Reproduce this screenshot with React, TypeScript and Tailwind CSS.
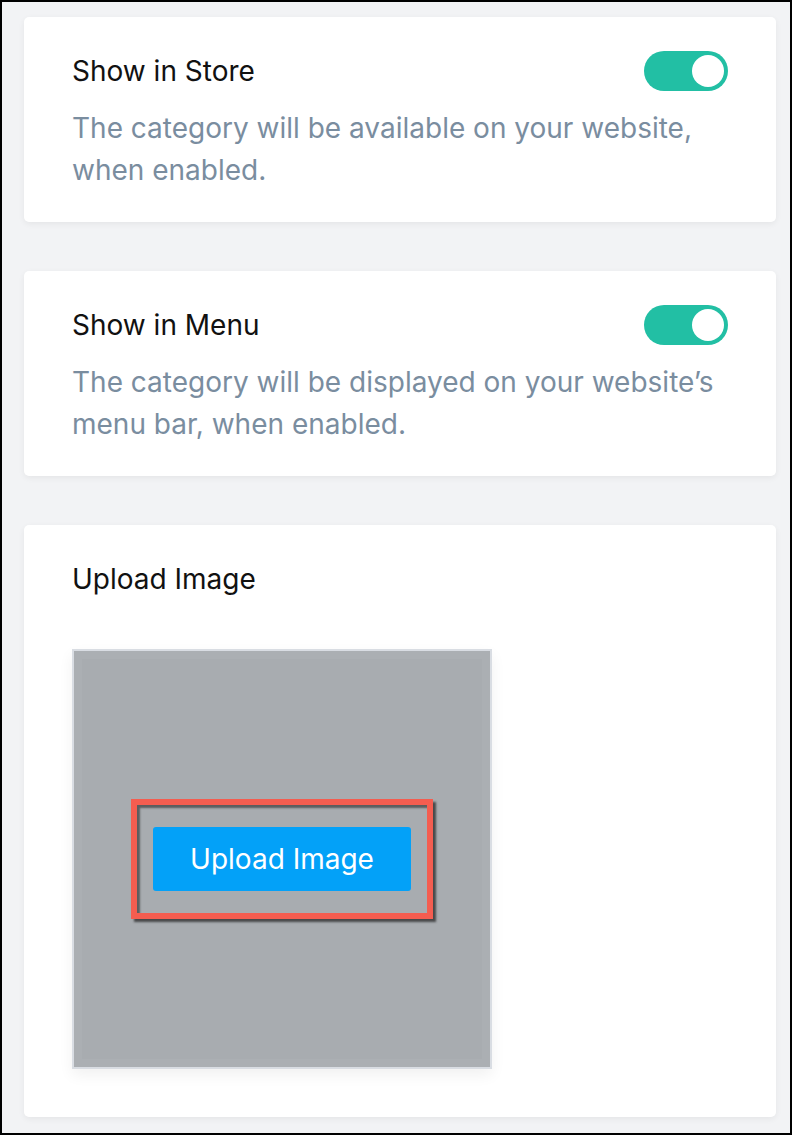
import React from "react";

function Toggle() {
  return (
    <div className="flex h-[40px] w-[84px] shrink-0 items-center justify-end rounded-full bg-[#22bfa4] px-[4px]">
      <span className="h-[32px] w-[32px] rounded-full bg-white" />
    </div>
  );
}

function SettingCard({ title, text }: { title: string; text: string }) {
  return (
    <div className="h-[205px] shrink-0 rounded-[5px] bg-white px-[48px] pt-[38px] shadow-[0_2px_6px_rgba(0,0,0,0.06)]">
      <div className="flex items-start justify-between">
        <div className="text-[28px] leading-[32px] text-[#111]">{title}</div>
        <div className="-mt-[4px]">
          <Toggle />
        </div>
      </div>
      <p className="mt-[16px] text-[28px] leading-[42px] text-[#7a8d9f]">{text}</p>
    </div>
  );
}

export default function App() {
  return (
    <div
      className="flex h-[1135px] w-[792px] flex-col gap-[49px] border-2 border-black bg-[#f2f3f5] pt-[15px] pr-[14px] pl-[22px]"
      style={{ fontFamily: "Inter, 'Noto Sans', sans-serif" }}
    >
      <SettingCard
        title="Show in Store"
        text="The category will be available on your website, when enabled."
      />
      <SettingCard
        title="Show in Menu"
        text="The category will be displayed on your website’s menu bar, when enabled."
      />
      <div className="rounded-[5px] bg-white px-[48px] pt-[38px] pb-[48px] shadow-[0_2px_6px_rgba(0,0,0,0.06)]">
        <div className="text-[28px] leading-[32px] text-[#111]">Upload Image</div>
        <div className="mt-[54px] h-[420px] w-[420px] border-2 border-[#d9dde3] bg-[#abafb3] p-[8px] shadow-[0_6px_14px_rgba(0,0,0,0.06)]">
          <div className="flex h-full w-full items-center justify-center bg-[#a8acb0]">
            <div className="border-[6px] border-[#f45d50] px-[16px] py-[22px] shadow-[3px_3px_2px_rgba(40,40,40,0.75),inset_3px_3px_2px_rgba(40,40,40,0.6)]">
              <button className="h-[64px] w-[258px] rounded-[3px] bg-[#03a1f8] text-[28px] text-white">
                Upload Image
              </button>
            </div>
          </div>
        </div>
      </div>
    </div>
  );
}
